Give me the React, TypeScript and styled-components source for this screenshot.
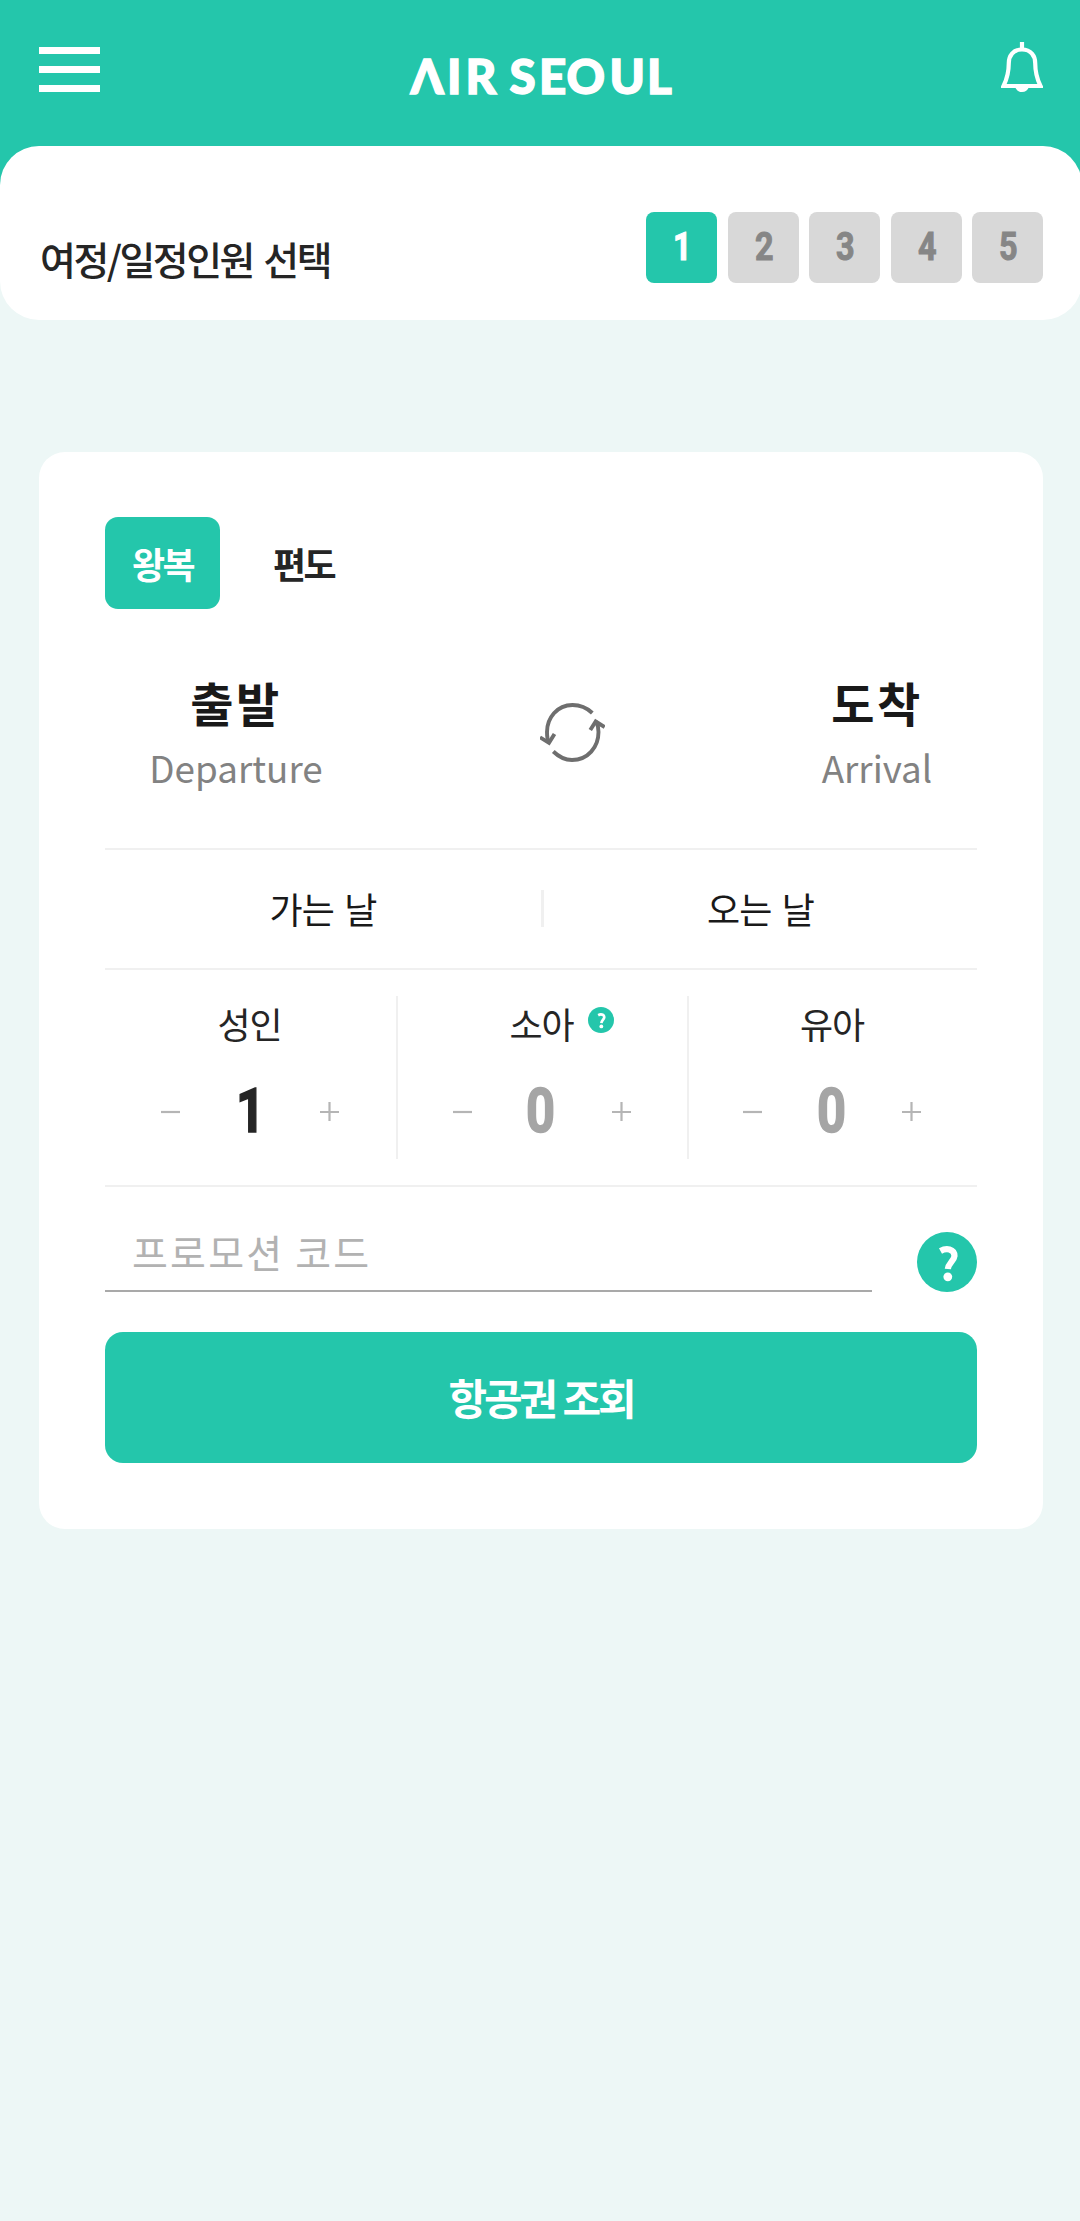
import React, { useState } from 'react';
import styled, { createGlobalStyle } from 'styled-components';

const TEAL = '#24c6ab';
const KR = `"Noto Sans CJK KR", "Noto Sans", sans-serif`;

const GlobalStyle = createGlobalStyle`
  *, *::before, *::after { box-sizing: border-box; }
  body { margin: 0; background: #edf7f6; font-family: ${KR}; color: #252525; overflow-x: hidden; }
  button, input { font-family: inherit; border: 0; background: none; padding: 0; margin: 0; }
`;

const Page = styled.div`
  display: flex;
  flex-direction: column;
  min-height: 2221px;
  overflow: hidden;
`;

const Header = styled.header`
  display: flex;
  justify-content: space-between;
  align-items: flex-start;
  height: 230px;
  padding: 0 37px 0 39px;
  background: ${TEAL};
`;

const MenuButton = styled.button`
  display: flex;
  flex-direction: column;
  justify-content: space-between;
  width: 61px;
  height: 45px;
  margin-top: 47px;
`;

const MenuBar = styled.span`
  height: 6.6px;
  background: #fff;
`;

const Logo = styled.svg`
  width: 270px;
  height: 80px;
  margin: 34px 11px 0 0;
  fill: #fff;
  stroke: #fff;
  stroke-width: 1.4px;
  overflow: visible;
  font-family: Lato, Inter, sans-serif;
  font-weight: 900;
  font-size: 47.5px;
`;

const BellIcon = styled.svg`
  width: 42px;
  height: 50px;
  margin-top: 42px;
`;

const StepSheet = styled.section`
  display: flex;
  justify-content: space-between;
  width: 1082px;
  height: 174px;
  margin-top: -84px;
  padding: 66px 39px 0 40px;
  border-radius: 39px;
  background: #fff;
`;

const PageTitle = styled.h1`
  margin: 17px 0 0;
  font-size: 39px;
  line-height: 58px;
  font-weight: 500;
  letter-spacing: -2.5px;
  word-spacing: 4px;
`;

const Steps = styled.ol`
  display: flex;
  gap: 10.5px;
  margin: 0;
  padding: 0;
  list-style: none;
`;

const Step = styled.li<{ $active?: boolean }>`
  display: flex;
  justify-content: center;
  width: 71px;
  height: 71px;
  padding: 1px 0 0 2px;
  border-radius: 8px;
  background: ${(p) => (p.$active ? TEAL : '#d8d8d8')};
  color: ${(p) => (p.$active ? '#fff' : '#868686')};
`;

const Digit = styled.span<{ $size: number }>`
  display: inline-block;
  font-family: Roboto, sans-serif;
  font-weight: 700;
  font-size: ${(p) => p.$size}px;
  line-height: 68px;
  transform: scaleX(0.83);
  -webkit-text-stroke: 0.026em currentColor;
`;

const Card = styled.main`
  display: flex;
  flex-direction: column;
  width: 1004px;
  height: 1077px;
  margin: 132px 0 0 39px;
  padding: 65px 66px 0;
  border-radius: 26px;
  background: #fff;
`;

const Tabs = styled.div`
  display: flex;
  gap: 26px;
`;

const Tab = styled.button<{ $active: boolean }>`
  width: 115px;
  height: 92px;
  padding-bottom: 1px;
  border-radius: 13px;
  background: ${(p) => (p.$active ? TEAL : 'transparent')};
  color: ${(p) => (p.$active ? '#fff' : '#252525')};
  font-size: 36px;
  font-weight: 700;
  letter-spacing: -2.6px;
`;

const Route = styled.div`
  display: grid;
  grid-template-columns: 262px 1fr 200px;
  height: 239px;
  padding-top: 57px;
`;

const Place = styled.div`
  display: flex;
  flex-direction: column;
  align-items: center;
`;

const PlaceName = styled.strong`
  font-size: 47px;
  line-height: 72px;
  font-weight: 700;
  letter-spacing: 2.4px;
  color: #191919;
`;

const PlaceSub = styled.span`
  font-size: 36.8px;
  line-height: 58px;
  color: #828282;
`;

const SwapIcon = styled.svg`
  width: 65px;
  height: 59px;
  margin: 37px 0 0 173px;
`;

const Dates = styled.div`
  display: grid;
  grid-template-columns: 436px 3px 1fr;
  align-items: center;
  height: 122px;
  border-top: 2px solid #f0f0f0;
  border-bottom: 2px solid #f0f0f0;
`;

const DateField = styled.button`
  height: 60px;
  padding-bottom: 1px;
  font-size: 36px;
  line-height: 59px;
  letter-spacing: -1px;
  word-spacing: 3.5px;
  color: #191919;
`;

const DateDivider = styled.span`
  height: 37px;
  margin-top: -2px;
  background: #f0f0f0;
`;

const Passengers = styled.div`
  display: grid;
  grid-template-columns: 293px 291px 288px;
  height: 217px;
  padding: 26px 0;
  border-bottom: 2px solid #f0f0f0;
`;

const Passenger = styled.div`
  display: flex;
  flex-direction: column;
  align-items: center;
  height: 163px;
  padding-right: 2px;
  border-right: 2.5px solid #f0f0f0;
  &:last-child { border-right: 0; }
`;

const PassengerLabel = styled.div`
  position: relative;
  font-size: 36px;
  line-height: 54px;
  letter-spacing: -1px;
`;

const LabelHelp = styled.span`
  position: absolute;
  left: 79px;
  top: 11px;
  display: flex;
`;

const Counter = styled.div`
  display: flex;
  justify-content: space-between;
  align-items: center;
  width: 178px;
  height: 68px;
  margin-top: 27px;
`;

const Count = styled(Digit)<{ $filled: boolean }>`
  margin-left: ${(p) => (p.$filled ? 2 : -2)}px;
  color: ${(p) => (p.$filled ? '#252525' : '#a5a5a5')};
`;

const Promo = styled.div`
  display: flex;
  justify-content: space-between;
  align-items: flex-end;
  height: 105px;
`;

const PromoInput = styled.input`
  width: 767px;
  height: 78px;
  padding: 0 27px 2px;
  border-bottom: 2px solid #a9a9a9;
  outline: 0;
  font-size: 39px;
  letter-spacing: 2.2px;
  &::placeholder { color: #b2b2b2; opacity: 1; }
`;

const SearchButton = styled.button`
  height: 131px;
  margin-top: 40px;
  padding-bottom: 2px;
  border-radius: 18px;
  background: ${TEAL};
  color: #fff;
  font-size: 42px;
  font-weight: 700;
  letter-spacing: -3.2px;
  word-spacing: 1.5px;
`;

const HelpSvg = styled.svg`
  flex: none;
`;

const StepperButton = styled.button`
  display: flex;
  width: 19px;
  height: 19px;
`;

function Help({ size }: { size: number }) {
  return (
    <HelpSvg width={size} height={size} viewBox="0 0 60 60">
      <circle cx="30" cy="30" r="30" fill={TEAL} />
      <path d="M23.500 19Q28 16.500 32.500 17.500Q37.500 19 37.500 24C37 29 31.500 31 30.800 37" fill="none" stroke="#fff" strokeWidth="6.2" />
      <circle cx="30.800" cy="44.800" r="4.400" fill="#fff" />
    </HelpSvg>
  );
}

function Stepper({ plus, onClick }: { plus?: boolean; onClick: () => void }) {
  return (
    <StepperButton onClick={onClick}>
      <svg width="19" height="19" viewBox="0 0 19 19" stroke="#b5b5b5" strokeWidth="2.2">
        <path d={plus ? 'M0 10H19M9.5 0V19' : 'M0 10H19'} />
      </svg>
    </StepperButton>
  );
}

export default function App() {
  const [trip, setTrip] = useState('왕복');
  const [counts, setCounts] = useState([1, 0, 0]);
  const change = (i: number, d: number) =>
    setCounts((c) => c.map((n, j) => (j === i ? Math.max(0, n + d) : n)));

  return (
    <Page>
      <GlobalStyle />
      <Header>
        <MenuButton aria-label="메뉴">
          <MenuBar />
          <MenuBar />
          <MenuBar />
        </MenuButton>
        <Logo viewBox="0 0 270 80">
          <text y="60" x="0.500 37 55.500 83 99.500 129 156.500 199.500 237">ΛIR SEOUL</text>
        </Logo>
        <BellIcon viewBox="0 0 42 50" fill="none" stroke="#fff" strokeWidth="4.2">
          <path d="M21 0V7" />
          <path d="M21 7.5C12 7.5 7.8 14 7.8 21C7.8 31 6.5 36 2.5 44H39.5C35.5 36 34.2 31 34.2 21C34.2 14 30 7.5 21 7.5Z" />
          <path d="M14 45H28Q26 50 21 50Q16 50 14 45Z" fill="#fff" stroke="none" />
        </BellIcon>
      </Header>
      <StepSheet>
        <PageTitle>여정/일정인원 선택</PageTitle>
        <Steps>
          {[1, 2, 3, 4, 5].map((n) => (
            <Step key={n} $active={n === 1}>
              <Digit $size={39}>{n}</Digit>
            </Step>
          ))}
        </Steps>
      </StepSheet>
      <Card>
        <Tabs>
          {['왕복', '편도'].map((t) => (
            <Tab key={t} $active={trip === t} onClick={() => setTrip(t)}>
              {t}
            </Tab>
          ))}
        </Tabs>
        <Route>
          <Place>
            <PlaceName>출발</PlaceName>
            <PlaceSub>Departure</PlaceSub>
          </Place>
          <SwapIcon viewBox="0 0 65 59" fill="none" stroke="#6e6e6e" strokeWidth="3.9">
            <path d="M52.300 10C46 4 39 2 32.500 2C17 2 7 15 7 29C7 33 7.500 37 9 40" />
            <path d="M0 34.300L9 39.800L14.500 31" />
            <path d="M13.300 48.500C19 54 25 57 32 57C48 57 58.500 44 58.500 29C58.500 25 58 22 56 18.500" />
            <path d="M50.300 27L55.700 18.500L64.700 24" />
          </SwapIcon>
          <Place>
            <PlaceName>도착</PlaceName>
            <PlaceSub>Arrival</PlaceSub>
          </Place>
        </Route>
        <Dates>
          <DateField>가는 날</DateField>
          <DateDivider />
          <DateField>오는 날</DateField>
        </Dates>
        <Passengers>
          {['성인', '소아', '유아'].map((label, i) => (
            <Passenger key={label}>
              <PassengerLabel>
                {label}
                {i === 1 && (
                  <LabelHelp>
                    <Help size={26} />
                  </LabelHelp>
                )}
              </PassengerLabel>
              <Counter>
                <Stepper onClick={() => change(i, -1)} />
                <Count $size={61} $filled={counts[i] > 0}>
                  {counts[i]}
                </Count>
                <Stepper plus onClick={() => change(i, 1)} />
              </Counter>
            </Passenger>
          ))}
        </Passengers>
        <Promo>
          <PromoInput placeholder="프로모션 코드" />
          <Help size={60} />
        </Promo>
        <SearchButton>항공권 조회</SearchButton>
      </Card>
    </Page>
  );
}
